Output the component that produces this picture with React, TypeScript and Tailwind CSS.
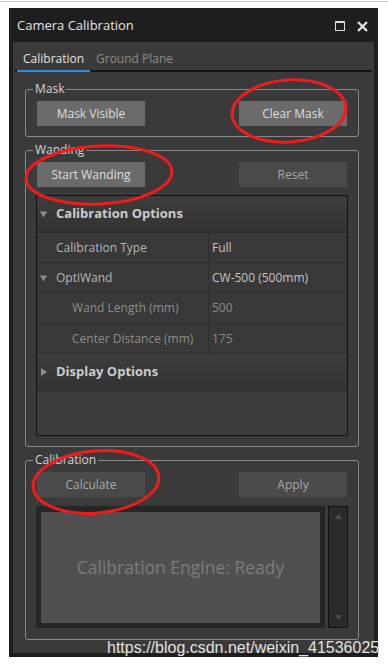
import type { ReactNode } from 'react';

const ui = "font-['Open_Sans','Noto_Sans',sans-serif]";

function Btn({ label, light }: { label: string; light?: boolean }) {
  return (
    <div
      className={`flex h-[25px] w-[108px] items-center justify-center text-[12px] ${
        light ? 'bg-[#6b6b6b] text-[#dedede]' : 'bg-[#4a4a4a] text-[#a8a8a8]'
      }`}
    >
      {label}
    </div>
  );
}

function Group({ title, children, className }: { title: string; children: ReactNode; className?: string }) {
  return (
    <fieldset className={`ml-[12px] mr-[15px] rounded-[3px] border border-[#8a8a8a] px-[11px] pt-[4px] ${className ?? ''}`}>
      <legend className="-ml-[4px] px-[2px] text-[12px] leading-4 text-[#d4d4d4]">{title}</legend>
      {children}
    </fieldset>
  );
}

function Arrow({ open }: { open: boolean }) {
  return (
    <svg width="8" height="8" viewBox="0 0 8 8" className="shrink-0">
      {open ? <path d="M0 1.5h7L3.5 7.5z" fill="#8c8c8c" /> : <path d="M1 0v8l6-4z" fill="#8c8c8c" />}
    </svg>
  );
}

function Header({ label, open, h }: { label: string; open: boolean; h: string }) {
  return (
    <div className={`flex ${h} items-center border-b border-[#2c2c2c] bg-gradient-to-b from-[#3d3d3d] to-[#323232] pl-[3px]`}>
      <Arrow open={open} />
      <span className="ml-[8px] text-[13px] font-bold text-[#cccccc]">{label}</span>
    </div>
  );
}

function Row({ label, value, indent, dim, arrow, h }: { label: string; value: string; indent?: boolean; dim?: boolean; arrow?: boolean; h: string }) {
  return (
    <div className={`flex ${h} border-b border-[#2e2e2e] bg-[#383838] text-[12px]`}>
      <div className="flex w-[172px] items-center border-r border-[#2e2e2e] pl-[3px]">
        {arrow ? <Arrow open /> : <span className="w-[8px]" />}
        <span className={`${indent ? 'ml-[24px]' : 'ml-[8px]'} ${dim ? 'text-[#8e8e8e]' : 'text-[#b6b6b6]'}`}>{label}</span>
      </div>
      <div className={`flex items-center pl-[3px] ${dim ? 'text-[#8a8a8a]' : 'text-[#c4c4c4]'}`}>{value}</div>
    </div>
  );
}

export default function App() {
  return (
    <div className={`relative min-h-[667px] bg-white ${ui}`}>
      <div className="pt-px">
        <div className="h-px bg-[#c8c8c8]" />
      </div>

      <div className="ml-[9px] mt-[6px] w-[369px]">
        {/* Title bar */}
        <div className="flex h-[34px] items-center justify-between bg-[#1e1e1e] pl-[8px] pr-[10px] pt-[2px]">
          <span className="text-[13px] text-[#e4e4e4]">Camera Calibration</span>
          <div className="flex items-center gap-[12px]">
            <div className="h-[10px] w-[10px] border-[1.5px] border-t-[2.5px] border-[#dcdcdc]" />
            <svg width="11" height="11" viewBox="0 0 11 11">
              <path d="M1 1l9 9M10 1l-9 9" stroke="#e6e6e6" strokeWidth="2.2" />
            </svg>
          </div>
        </div>

        {/* Body */}
        <div className="border-x-4 border-b-4 border-[#1e1e1e] bg-[#3a3a3a] pb-[13px]">
          <div className="mx-[2px] flex h-[30px] items-end border-b-2 border-[#141414]">
            <div className="-mb-[2px] ml-[2px] w-[73px] border-b-2 border-[#2a8ce0] pb-[2px] pl-[6px] text-[12px] text-[#e2e2e2]">
              Calibration
            </div>
            <div className="pb-[2px] pl-[6px] text-[12px] text-[#8c8c8c]">Ground Plane</div>
          </div>

          <Group title="Mask" className="mt-[9px] pb-[10px]">
            <div className="flex justify-between">
              <Btn label="Mask Visible" light />
              <Btn label="Clear Mask" light />
            </div>
          </Group>

          <Group title="Wanding" className="mt-[5px] pb-[10px]">
            <div className="flex justify-between">
              <Btn label="Start Wanding" light />
              <Btn label="Reset" />
            </div>
            <div className="-mx-px mt-[8px] flex h-[241px] flex-col border border-[#121212] bg-[#3b3b3b]">
              <Header label="Calibration Options" open h="h-[37px]" />
              <Row label="Calibration Type" value="Full" h="h-[30px]" />
              <Row label="OptiWand" value="CW-500 (500mm)" arrow h="h-[30px]" />
              <Row label="Wand Length (mm)" value="500" indent dim h="h-[31px]" />
              <Row label="Center Distance (mm)" value="175" indent dim h="h-[30px]" />
              <Header label="Display Options" open={false} h="h-[37px]" />
              <div className="flex-1 bg-[#3b3b3b]" />
            </div>
          </Group>

          <Group title="Calibration" className="mt-[5px] pb-[11px]">
            <div className="flex justify-between">
              <Btn label="Calculate" />
              <Btn label="Apply" />
            </div>
            <div className="-mx-px mt-[9px] flex h-[122px] gap-[3px]">
              <div className="flex-1 bg-[#262626] px-[5px] pb-[5px] pt-[6px]">
                <div className="flex h-full items-center justify-center bg-[#505050] text-[17.5px] text-[#7c7c7c]">
                  Calibration Engine: Ready
                </div>
              </div>
              <div className="flex w-[20px] flex-col items-center justify-between border border-[#111] bg-[#2a2a2a] py-[7px]">
                <svg width="7" height="5" viewBox="0 0 7 5"><path d="M0 5h7L3.5 0z" fill="#4e4e4e" /></svg>
                <svg width="7" height="5" viewBox="0 0 7 5"><path d="M0 0h7L3.5 5z" fill="#4e4e4e" /></svg>
              </div>
            </div>
          </Group>
        </div>
      </div>

      {/* watermark */}
      <div className="absolute left-[107px] top-[638px] font-['Liberation_Sans',Arial,sans-serif] text-[16px] leading-[19px] text-[#e2e2e2] [text-shadow:0_0_1px_#333]">
        https://blog.csdn.net/weixin_41536025
      </div>

      {/* red annotation ellipses */}
      <svg className="pointer-events-none absolute left-0 top-0" width="388" height="667">
        <g fill="none" stroke="#f01c1c" strokeWidth="3">
          <ellipse cx="289" cy="111" rx="57" ry="31" transform="rotate(-4 289 111)" />
          <ellipse cx="99" cy="175" rx="73" ry="29" transform="rotate(-3 99 175)" />
          <ellipse cx="96" cy="482" rx="63" ry="31" transform="rotate(-5 96 482)" />
        </g>
      </svg>
    </div>
  );
}
